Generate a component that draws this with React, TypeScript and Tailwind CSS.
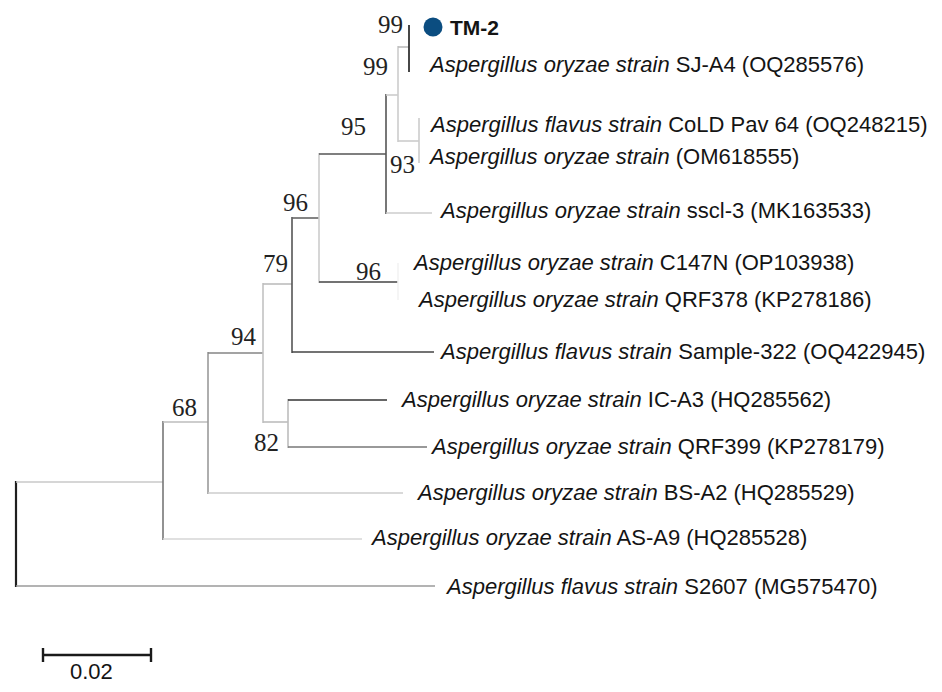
import React from "react";

// branch segments of the tree: [x1, y1, x2, y2, colour, width]
type Seg = [number, number, number, number, string, number?];

const segments: Seg[] = [
  // root
  [16, 481, 16, 587, "#1f1f1f", 2.2],
  [16, 482, 163, 482, "#c8c8c8"],
  [16, 586, 435, 586, "#9a9a9a"],
  // node K
  [163, 421, 163, 540, "#777777"],
  [163, 539, 362, 539, "#d6d6d6"],
  [163, 422, 208, 422, "#bdbdbd"],
  // node J (68)
  [208, 352, 208, 494, "#9a9a9a"],
  [208, 493, 403, 493, "#cccccc"],
  [208, 353, 263, 353, "#858585"],
  // node H (94)
  [263, 283, 263, 423, "#c2c2c2"],
  [263, 422, 288, 422, "#bdbdbd"],
  // node I (82)
  [288, 399, 288, 448, "#bdbdbd"],
  [288, 400, 387, 400, "#333333"],
  [288, 447, 427, 447, "#777777"],
  // node G (79)
  [263, 284, 292, 284, "#bdbdbd"],
  [292, 217, 292, 353, "#555555"],
  [292, 352, 434, 352, "#444444"],
  [292, 218, 319, 218, "#666666"],
  // node C (96)
  [319, 153, 319, 283, "#cccccc"],
  [319, 282, 398, 282, "#444444"],
  [398, 263, 398, 300, "#f3f3f3"],
  [319, 154, 386, 154, "#555555"],
  // node A (95)
  [386, 94, 386, 214, "#555555"],
  [386, 213, 432, 213, "#cccccc"],
  [386, 95, 398, 95, "#cccccc"],
  // node B (99)
  [398, 46, 398, 142, "#cccccc"],
  [398, 47, 409, 47, "#bbbbbb"],
  [409, 25, 409, 72, "#333333", 1.8],
  [398, 141, 419, 141, "#cccccc"],
  [419, 118, 419, 163, "#cccccc"],
];

interface Leaf {
  x: number;
  y: number;
  species: string;
  rest: string;
}

const leaves: Leaf[] = [
  { x: 430, y: 65, species: "Aspergillus oryzae strain", rest: " SJ-A4 (OQ285576)" },
  { x: 431, y: 125, species: "Aspergillus flavus strain", rest: " CoLD Pav 64 (OQ248215)" },
  { x: 430, y: 157, species: "Aspergillus oryzae strain", rest: " (OM618555)" },
  { x: 441, y: 211, species: "Aspergillus oryzae strain", rest: " sscl-3 (MK163533)" },
  { x: 414, y: 263, species: "Aspergillus oryzae strain", rest: " C147N (OP103938)" },
  { x: 419, y: 300, species: "Aspergillus oryzae strain", rest: " QRF378 (KP278186)" },
  { x: 441, y: 352, species: "Aspergillus flavus strain", rest: " Sample-322 (OQ422945)" },
  { x: 402, y: 400, species: "Aspergillus oryzae strain", rest: " IC-A3 (HQ285562)" },
  { x: 432, y: 447, species: "Aspergillus oryzae strain", rest: " QRF399 (KP278179)" },
  { x: 418, y: 493, species: "Aspergillus oryzae strain", rest: " BS-A2 (HQ285529)" },
  { x: 372, y: 538, species: "Aspergillus oryzae strain", rest: " AS-A9 (HQ285528)" },
  { x: 447, y: 587, species: "Aspergillus flavus strain", rest: " S2607 (MG575470)" },
];

// bootstrap values: left edge and top of the digits
const bootstraps = [
  { x: 378, y: 15, v: "99" },
  { x: 363, y: 57, v: "99" },
  { x: 341, y: 117, v: "95" },
  { x: 390, y: 155, v: "93" },
  { x: 283, y: 193, v: "96" },
  { x: 356, y: 262, v: "96" },
  { x: 263, y: 254, v: "79" },
  { x: 231, y: 327, v: "94" },
  { x: 172, y: 398, v: "68" },
  { x: 254, y: 433, v: "82" },
];

const App = () => {
  return (
    <div className="relative w-[942px] h-[692px] overflow-hidden bg-white text-[#141414]">
      {/* Branches */}
      <svg className="absolute inset-0" width={942} height={692} viewBox="0 0 942 692">
        {segments.map(([x1, y1, x2, y2, c, w], i) => (
          <line key={i} x1={x1} y1={y1} x2={x2} y2={y2} stroke={c} strokeWidth={w ?? 1.6} />
        ))}
        {/* scale bar */}
        <line x1={42} y1={655} x2={152} y2={655} stroke="#1a1a1a" strokeWidth={2.6} />
        <line x1={43} y1={648} x2={43} y2={662} stroke="#1a1a1a" strokeWidth={2.4} />
        <line x1={151} y1={648} x2={151} y2={662} stroke="#1a1a1a" strokeWidth={2.4} />
        {/* TM-2 marker */}
        <circle cx={433} cy={27} r={9.5} fill="#0b4d80" />
      </svg>

      {/* Query sequence */}
      <span className="absolute left-[450px] top-[17px] whitespace-nowrap font-['Liberation_Sans',Arial,sans-serif] text-[21px] leading-[21px] font-bold">
        TM-2
      </span>

      {/* Reference sequences */}
      {leaves.map((leaf, i) => (
        <span
          key={i}
          className="absolute whitespace-nowrap font-['Liberation_Sans',Arial,sans-serif] text-[22px] leading-[22px]"
          style={{ left: leaf.x, top: leaf.y - 11 }}
        >
          <i>{leaf.species}</i>
          {leaf.rest}
        </span>
      ))}

      {/* Bootstrap support */}
      {bootstraps.map((b, i) => (
        <span
          key={i}
          className="absolute font-['Liberation_Serif','Times_New_Roman',serif] text-[25px] leading-[25px] text-[#222]"
          style={{ left: b.x, top: b.y - 3 }}
        >
          {b.v}
        </span>
      ))}

      <span className="absolute left-[70px] top-[661px] font-['Liberation_Sans',Arial,sans-serif] text-[22px] leading-[22px]">
        0.02
      </span>
    </div>
  );
};

export default App;
